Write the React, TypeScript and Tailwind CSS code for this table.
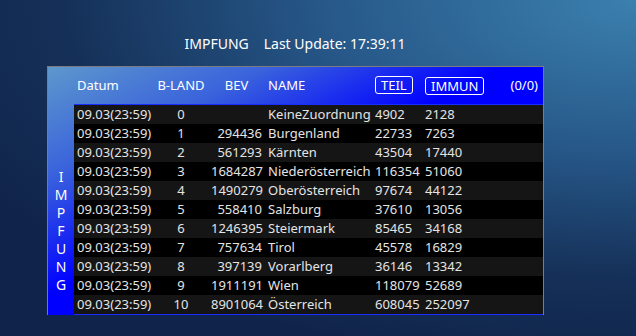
const rows = [
  ["0", "", "KeineZuordnung", "4902", "2128"],
  ["1", "294436", "Burgenland", "22733", "7263"],
  ["2", "561293", "Kärnten", "43504", "17440"],
  ["3", "1684287", "Niederösterreich", "116354", "51060"],
  ["4", "1490279", "Oberösterreich", "97674", "44122"],
  ["5", "558410", "Salzburg", "37610", "13056"],
  ["6", "1246395", "Steiermark", "85465", "34168"],
  ["7", "757634", "Tirol", "45578", "16829"],
  ["8", "397139", "Vorarlberg", "36146", "13342"],
  ["9", "1911191", "Wien", "118079", "52689"],
  ["10", "8901064", "Österreich", "608045", "252097"],
];

const cols = "grid grid-cols-[77px_60px_53px_108px_50px_1fr]";

export default function App() {
  return (
    <div
      className="w-[636px] h-[336px] overflow-hidden bg-[radial-gradient(ellipse_120%_110%_at_100%_0%,#3b80ae_0%,#27598a_40%,#153058_75%,#10244b_100%)] text-[13px] text-[#e4e4e4]"
      style={{ fontFamily: '"Noto Sans", "Open Sans", sans-serif' }}
    >
      {/* Title */}
      <div className="ml-[47px] w-[496px] pt-[34px] h-[66px] flex justify-center gap-[15px] text-[14px] leading-5 text-white">
        <span>IMPFUNG</span>
        <span>Last Update: 17:39:11</span>
      </div>

      {/* Panel */}
      <div className="ml-[47px] w-[497px] border-t border-l border-r border-[#7c7c80] bg-[linear-gradient(to_bottom_right,#5d98cc_0%,#3a63dc_22%,#0000ff_46%)]">
        {/* Header */}
        <div className={`${cols} ml-[26px] h-[37px] items-center text-white`}>
          <span className="pl-[3px]">Datum</span>
          <span className="text-center">B-LAND</span>
          <span className="text-center pr-[2px]">BEV</span>
          <span className="pl-[4px]">NAME</span>
          <span className="pl-[3px]">
            <span className="inline-block border border-white rounded-[3px] px-[5px] leading-[16px]">TEIL</span>
          </span>
          <span className="pl-[3px] flex items-center justify-between pr-[5px]">
            <span className="inline-block border border-white rounded-[3px] px-[5px] leading-[16px]">IMMUN</span>
            <span>(0/0)</span>
          </span>
        </div>

        <div className="flex">
          {/* Side label */}
          <div className="w-[26px] flex flex-col items-center pt-[64px] text-[14px] leading-[18px] text-white">
            {"IMPFUNG".split("").map((c, i) => (
              <span key={i}>{c}</span>
            ))}
          </div>

          {/* Rows */}
          <div className="flex-1 border-t border-b border-[#1b2cff]">
            {rows.map((r, i) => (
              <div
                key={i}
                className={`${cols} h-[19px] items-center leading-[19px] ${i % 2 === 0 ? "bg-[#151515]" : "bg-black"}`}
              >
                <span className="pl-[3px]">09.03(23:59)</span>
                <span className="text-center">{r[0]}</span>
                <span className="text-right pr-[2px]">{r[1]}</span>
                <span className="pl-[4px] whitespace-nowrap">{r[2]}</span>
                <span className="pl-[3px]">{r[3]}</span>
                <span className="pl-[3px]">{r[4]}</span>
              </div>
            ))}
          </div>
        </div>
      </div>
    </div>
  );
}
